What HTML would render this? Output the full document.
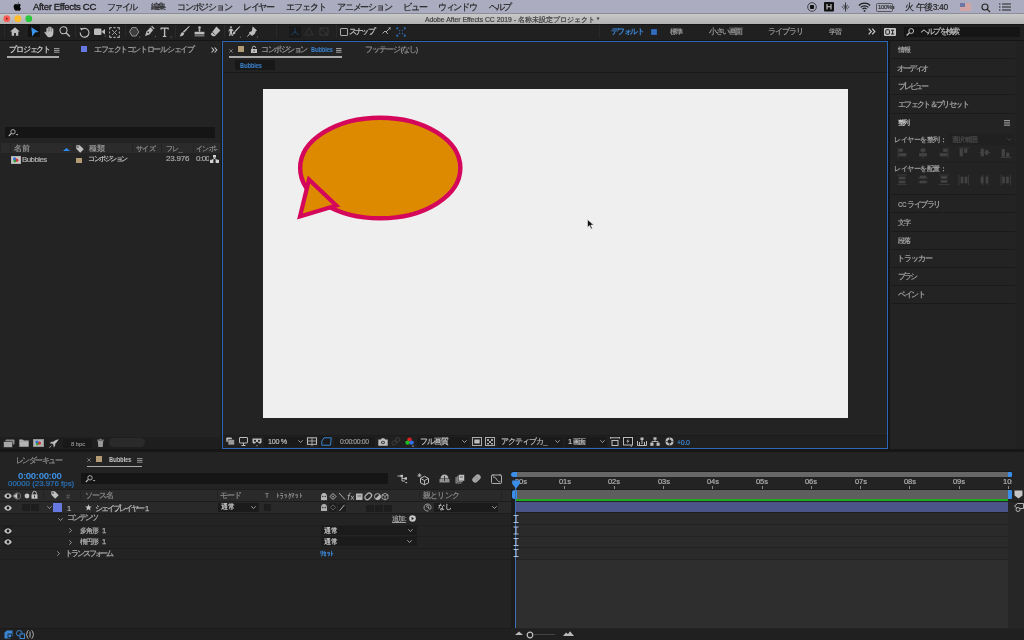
<!DOCTYPE html>
<html><head><meta charset="utf-8">
<style>
*{margin:0;padding:0;box-sizing:border-box}
html,body{width:1024px;height:640px;overflow:hidden;background:#161616;font-family:"Liberation Sans",sans-serif;position:relative}
.a{position:absolute}
.t{position:absolute;white-space:nowrap;line-height:1;will-change:transform}
svg{position:absolute;overflow:visible}
.mb{font-size:8.5px;letter-spacing:-1px;color:#262626;top:3px;-webkit-text-stroke:0.2px #262626}
.pnl{position:absolute;background:#232323}
.ptxt{color:#a8a8a8;font-size:8px;letter-spacing:-0.6px}
.sep{position:absolute;height:1px;background:#1a1a1a}
</style></head><body>

<!-- ============ MENU BAR ============ -->
<div class="a" style="left:0;top:0;width:1024px;height:13px;background:#abacc0"></div>
<div class="a" style="left:0;top:12.8px;width:1024px;height:1px;background:#8d8e9b"></div>
<svg style="left:13px;top:2px" width="9" height="9" viewBox="0 0 9 9"><path d="M6 0.2C5.3 0.3 4.6 0.9 4.6 1.7 5.3 1.7 6 1.1 6 0.2ZM4.5 2.2C3.9 2.2 3.4 1.9 2.7 1.9 1.6 2 .6 2.9.6 4.6c0 1.7 1.1 4.2 2.2 4.2.6 0 .9-.4 1.6-.4.8 0 1 .4 1.6.4 1 0 1.6-1.5 2-2.4-1.3-.6-1.3-2.6-.1-3.3-.5-.8-1.2-1-1.8-1-.7 0-1.2.3-1.6.3Z" fill="#0a0a0a"/></svg>
<div class="t" style="left:33px;top:2.3px;font-size:9.6px;color:#1c1c1c;letter-spacing:-0.35px;-webkit-text-stroke:0.3px #1c1c1c">After Effects CC</div>
<div class="t mb" style="left:107.20px;letter-spacing:-1.57px;-webkit-text-stroke-width:0.2px">ファイル</div>
<div class="t mb" style="left:150.8px;font-size:7.8px;letter-spacing:-0.6px;top:3.3px;-webkit-text-stroke-width:0.2px">編集</div>
<div class="t mb" style="left:177.20px;letter-spacing:-1.20px;-webkit-text-stroke-width:0.2px">コンポジション</div>
<div class="t mb" style="left:243.20px;letter-spacing:-1.36px;-webkit-text-stroke-width:0.2px">レイヤー</div>
<div class="t mb" style="left:285.70px;letter-spacing:-1.01px;-webkit-text-stroke-width:0.2px">エフェクト</div>
<div class="t mb" style="left:337.10px;letter-spacing:-1.22px;-webkit-text-stroke-width:0.2px">アニメーション</div>
<div class="t mb" style="left:402.80px;letter-spacing:-1.10px;-webkit-text-stroke-width:0.2px">ビュー</div>
<div class="t mb" style="left:438.00px;letter-spacing:-1.31px;-webkit-text-stroke-width:0.2px">ウィンドウ</div>
<div class="t mb" style="left:488.80px;letter-spacing:-1.90px;-webkit-text-stroke-width:0.2px">ヘルプ</div>
<!-- status icons -->
<svg style="left:807px;top:2px" width="11" height="10"><circle cx="5" cy="5" r="4.3" fill="none" stroke="#333" stroke-width="0.9"/><rect x="3" y="3" width="4" height="4" rx="0.8" fill="#111"/></svg>
<svg style="left:824px;top:2px" width="10" height="10"><rect x="0" y="0" width="10" height="9.5" rx="1" fill="#111"/><path d="M3 2v5.5M7 2v5.5M3 4.7h4" stroke="#ccc" stroke-width="1.1"/></svg>
<svg style="left:841px;top:2px" width="9" height="10" viewBox="0 0 9 10"><path d="M4.5 0.5v9M2.3 3l4.4 4M6.7 3L2.3 7M0.8 5h1.5M6.7 5h1.5" stroke="#2a2a2a" stroke-width="0.9" fill="none"/></svg>
<svg style="left:858px;top:2px" width="13" height="10" viewBox="0 0 13 10"><path d="M0.8 3.5a8.2 8.2 0 0 1 11.4 0M2.6 5.4a5.6 5.6 0 0 1 7.8 0M4.4 7.2a3 3 0 0 1 4.2 0" stroke="#1e1e1e" stroke-width="1.15" fill="none"/><circle cx="6.5" cy="8.9" r="0.9" fill="#1e1e1e"/></svg>
<svg style="left:876px;top:2.5px" width="19" height="9"><rect x="0.5" y="0.5" width="16" height="8" rx="1" fill="none" stroke="#444" stroke-width="0.8"/><rect x="17" y="3" width="1.3" height="3" fill="#444"/></svg>
<div class="t" style="left:878px;top:3.5px;font-size:6px;color:#333;letter-spacing:-0.3px;-webkit-text-stroke-width:0.2px">100%</div>
<div class="t mb" style="left:904.5px;letter-spacing:-0.4px;-webkit-text-stroke-width:0.2px">火 午後3:40</div>
<svg style="left:960px;top:3px" width="11" height="8"><rect width="11" height="8" fill="#d8b8b8"/><path d="M0 1h11M0 3h11M0 5h11M0 7h11" stroke="#c88888" stroke-width="0.8"/><rect width="5" height="4" fill="#6d76a8"/></svg>
<svg style="left:981px;top:2.5px" width="10" height="10"><circle cx="4" cy="4" r="3" fill="none" stroke="#222" stroke-width="1.1"/><path d="M6.2 6.2L9 9" stroke="#222" stroke-width="1.2"/></svg>
<svg style="left:999px;top:3px" width="12" height="8"><path d="M3 1h9M3 4h9M3 7h9" stroke="#222" stroke-width="1.1"/><circle cx="0.8" cy="1" r="0.7" fill="#222"/><circle cx="0.8" cy="4" r="0.7" fill="#222"/><circle cx="0.8" cy="7" r="0.7" fill="#222"/></svg>

<!-- ============ TITLE BAR ============ -->
<div class="a" style="left:0;top:13.8px;width:1024px;height:9.8px;background:linear-gradient(#c9c9c9,#b3b3b3)"></div><div class="a" style="left:0;top:23.6px;width:1024px;height:1px;background:#151515"></div>
<svg style="left:0;top:13px" width="40" height="11"><circle cx="6.8" cy="5.7" r="3.4" fill="#fb5e57"/><circle cx="6.8" cy="5.7" r="0.9" fill="#8a1a14"/><circle cx="17.8" cy="5.7" r="3.4" fill="#fdbb2e"/><circle cx="28.8" cy="5.7" r="3.4" fill="#2ac83f"/></svg>
<div class="t" style="left:425px;top:16.5px;font-size:6.8px;color:#3e3e3e;-webkit-text-stroke-width:0.2px">Adobe After Effects CC 2019 - 名称未設定プロジェクト *</div>

<!-- ============ TOOLBAR ============ -->
<div class="a" style="left:0;top:24.6px;width:1024px;height:15.2px;background:#202020"></div>
<div class="a" style="left:0;top:39.8px;width:1024px;height:1.2px;background:#151515"></div>

<!-- tool icons -->
<div class="a" style="left:4px;top:25px;width:1px;height:13px;background:#2a2a2a"></div>
<svg style="left:10px;top:27px" width="10" height="9" viewBox="0 0 10 9"><path d="M5 0.3L0.2 4.6h1.5V8.8h2.4V6h1.8v2.8h2.4V4.6h1.5Z" fill="#bdbdbd"/></svg>
<div class="a" style="left:28px;top:25px;width:12px;height:12px;background:#121212"></div>
<svg style="left:31px;top:26.5px" width="8" height="10" viewBox="0 0 8 10"><path d="M0.3 0.2L7.8 5 4 5.4 1.3 9.6Z" fill="#3a95f0"/></svg>
<svg style="left:44px;top:26px" width="11" height="12" viewBox="0 0 11 12"><g stroke="#bdbdbd" stroke-linecap="round" stroke-width="1.5" fill="none"><path d="M3.2 6V2.6M5 5.5V1.2M6.8 5.5V1.6M8.6 6V3"/></g><path d="M2.5 5.5h6.8v2c0 2.2-1.5 3.8-3.6 3.8-1.4 0-2.2-.7-2.9-1.6L.6 6.8c-.4-.5.2-1.3.9-.9L2.5 6.8Z" fill="#bdbdbd"/></svg>
<svg style="left:59px;top:26px" width="12" height="11" viewBox="0 0 12 11"><circle cx="4.5" cy="4.3" r="3.5" fill="none" stroke="#bdbdbd" stroke-width="1.1"/><path d="M7 6.8L10.8 10.5" stroke="#bdbdbd" stroke-width="1.4"/></svg>
<div class="a" style="left:75px;top:25px;width:1px;height:13px;background:#2a2a2a"></div>
<svg style="left:79px;top:26.5px" width="11" height="11" viewBox="0 0 11 11"><path d="M3 2.2A4.4 4.4 0 1 1 1.2 5.5" fill="none" stroke="#bdbdbd" stroke-width="1.1"/><path d="M0.8 0.8L3.8 1.2 2.6 3.8Z" fill="#bdbdbd"/></svg>
<svg style="left:94px;top:27px" width="12" height="10" viewBox="0 0 12 10"><rect x="0" y="1.5" width="7.5" height="6.5" rx="1.2" fill="#bdbdbd"/><path d="M7.5 4.7L11 2v5.5Z" fill="#bdbdbd"/><path d="M10.5 9.5h1.2V8.3Z" fill="#999"/></svg>
<svg style="left:109px;top:26.5px" width="11" height="11" viewBox="0 0 11 11"><path d="M0.6 0.6h2.2M4.4 0.6h2.2M8.2 0.6h2.2M0.6 10.4h2.2M4.4 10.4h2.2M8.2 10.4h2.2M0.6 0.6v2.2M0.6 4.4v2.2M0.6 8.2v2.2M10.4 0.6v2.2M10.4 4.4v2.2M10.4 8.2v2.2" stroke="#a8a8a8" stroke-width="1.1"/><path d="M3 3L8 8M8 3L3 8" stroke="#a8a8a8" stroke-width="0.9"/></svg>
<div class="a" style="left:125px;top:25px;width:1px;height:13px;background:#2a2a2a"></div>
<svg style="left:129px;top:26.5px" width="12" height="11" viewBox="0 0 12 11"><path d="M3 0.6h4.2L9.8 4.8 7.2 9H3L0.6 4.8Z" fill="#3c3c3c" stroke="#a0a0a0" stroke-width="0.9"/><path d="M10 10.5h1.2V9.3Z" fill="#999"/></svg>
<svg style="left:144px;top:26px" width="12" height="12" viewBox="0 0 12 12"><path d="M6.5 1.3l2.6 2.6L5.5 8.5 1 10l1.5-4.5Z" fill="#bdbdbd"/><path d="M7.6 0.3l2.6 2.6" stroke="#bdbdbd" stroke-width="1.3"/><circle cx="4.2" cy="6.4" r="0.8" fill="#1e1e1e"/><path d="M10.5 11h1.2V9.8Z" fill="#999"/></svg>
<svg style="left:160px;top:26.5px" width="12" height="11" viewBox="0 0 12 11"><path d="M0.5 0.5h8.2v2.2h-0.8L7.4 1.7H5.3v7.1l1.1 0.5V9.9H2.8V9.3l1.1-0.5V1.7H1.8L1.3 2.7H0.5Z" fill="#bdbdbd"/><path d="M10.3 10.5h1.2V9.3Z" fill="#999"/></svg>
<div class="a" style="left:175px;top:25px;width:1px;height:13px;background:#2a2a2a"></div>
<svg style="left:179px;top:26px" width="11" height="11" viewBox="0 0 11 11"><path d="M10.3 0.4L5.2 6.3 4.3 5.5Z" fill="#bdbdbd" stroke="#bdbdbd" stroke-width="0.8"/><path d="M3.6 6.2c1.2 0 1.7.8 1.4 1.8-.4 1.5-2.4 2.4-4.5 2.3 1-.7.9-1.6 1.3-2.6.4-.9 1-1.5 1.8-1.5Z" fill="#bdbdbd"/></svg>
<svg style="left:194px;top:26px" width="11" height="11" viewBox="0 0 11 11"><circle cx="5.5" cy="1.5" r="1.3" fill="#bdbdbd"/><path d="M4.7 2.5h1.6v3.2H4.7Z" fill="#bdbdbd"/><path d="M0.6 5.8h9.8v2.6H0.6Z" fill="#bdbdbd"/><path d="M0.6 9.2h9.8v1.2H0.6Z" fill="#8a8a8a"/></svg>
<svg style="left:210px;top:26px" width="11" height="11" viewBox="0 0 11 11"><path d="M6.4 0.6l4 4-5.6 5.6H2.6L0.6 8.2Z" fill="#bdbdbd"/><path d="M2.5 6.3l2.2 2.2" stroke="#1e1e1e" stroke-width="0.9"/></svg>
<div class="a" style="left:224px;top:25px;width:1px;height:13px;background:#2a2a2a"></div>
<svg style="left:228px;top:26px" width="13" height="12" viewBox="0 0 13 12"><circle cx="3" cy="1.3" r="1" fill="#bdbdbd"/><path d="M1.6 2.8h2.6l1.4 2.2-0.7.4-0.9-1.2V7L5 10H3.8L2.9 7.6 2.2 10H1.1L1.7 6.8V4.3L0.9 5.4 0.4 5Z" fill="#bdbdbd"/><path d="M11.8 0.5L7.6 5.5 7 5Z" fill="#bdbdbd" stroke="#bdbdbd" stroke-width="0.8"/><path d="M6.2 5.4c1 0 1.4.6 1.2 1.5-.3 1.1-1.8 1.8-3.4 1.7.7-.5.7-1.2 1-1.9.3-.7.6-1.3 1.2-1.3Z" fill="#bdbdbd"/><path d="M11.6 11.5h1.2V10.3Z" fill="#999"/></svg>
<svg style="left:247px;top:26px" width="12" height="12" viewBox="0 0 12 12"><path d="M5.8 0.4l4.2 4.2-1.2.6-.9 2.6L5 10.1 3.9 9 1.8 6.9 2.7 5.9 4.9 4.9 5.3 1.8Z" fill="#bdbdbd"/><path d="M3.3 7.2L0.4 10.6" stroke="#bdbdbd" stroke-width="1"/><path d="M9.8 11.5H11V10.3Z" fill="#999"/></svg>
<div class="a" style="left:276px;top:25px;width:1px;height:13px;background:#2a2a2a"></div>
<div class="a" style="left:289px;top:25.5px;width:12px;height:12px;background:#191919"></div>
<svg style="left:290px;top:27px" width="10" height="9" viewBox="0 0 10 9"><path d="M5 0.5V5L1 8M5 5l4 3" stroke="#1f4068" stroke-width="0.9" fill="none"/><circle cx="5" cy="5" r="0.8" fill="#1f4068"/></svg>
<svg style="left:304px;top:27px" width="10" height="9" viewBox="0 0 10 9"><path d="M5 0.5L1 8h8Z" stroke="#363636" stroke-width="0.9" fill="none"/></svg>
<svg style="left:319px;top:27px" width="10" height="9" viewBox="0 0 10 9"><path d="M1 1h8v7H1Z M1 1l8 7" stroke="#3c3c3c" stroke-width="0.9" fill="none"/></svg>
<div class="a" style="left:335.5px;top:25px;width:1px;height:13px;background:#2a2a2a"></div>
<div class="a" style="left:340px;top:27.5px;width:8px;height:8px;border:1.1px solid #a8a8a8;border-radius:1px"></div>
<div class="t" style="left:348.50px;top:27.5px;font-size:7.8px;letter-spacing:-1.77px;color:#b4b4b4;-webkit-text-stroke-width:0.3px">スナップ</div>
<svg style="left:382px;top:27px" width="9" height="9" viewBox="0 0 9 9"><path d="M0.5 6.5L3 4l3 3M4 5l4.3-4.3" stroke="#a8a8a8" stroke-width="1" fill="none"/><path d="M6 0.5h2.5V3Z" fill="#a8a8a8"/></svg>
<svg style="left:396px;top:27px" width="10" height="10" viewBox="0 0 10 10"><g fill="#2f6fba"><circle cx="1.3" cy="1.3" r="1.1"/><circle cx="8.7" cy="1.3" r="1.1"/><circle cx="1.3" cy="8.7" r="1.1"/><circle cx="8.7" cy="8.7" r="1.1"/><circle cx="3.6" cy="3.6" r="0.7"/><circle cx="6.4" cy="3.6" r="0.7"/><circle cx="3.6" cy="6.4" r="0.7"/><circle cx="6.4" cy="6.4" r="0.7"/></g></svg>
<div class="a" style="left:598.5px;top:25px;width:1px;height:13px;background:#2a2a2a"></div>
<div class="t" style="left:610.70px;top:28px;font-size:8px;letter-spacing:-1.61px;color:#3b86d4;font-weight:bold">デフォルト</div>
<svg style="left:651px;top:29px" width="6" height="6"><rect width="6" height="6" fill="#2b5ca8"/><path d="M0.8 1.5h4.4M0.8 3h4.4M0.8 4.5h4.4" stroke="#3f7cd0" stroke-width="0.7"/></svg>
<div class="t" style="left:670.00px;top:28px;font-size:7px;letter-spacing:-1.50px;color:#8e8e8e;font-weight:bold">標準</div>
<div class="t" style="left:709.00px;top:28px;font-size:8px;letter-spacing:-1.45px;color:#8e8e8e;font-weight:bold">小さい画面</div>
<div class="t" style="left:768.00px;top:28px;font-size:8px;letter-spacing:-0.95px;color:#8e8e8e;font-weight:bold">ライブラリ</div>
<div class="t" style="left:829.00px;top:28px;font-size:7px;letter-spacing:-1.50px;color:#8e8e8e;font-weight:bold">学習</div>
<svg style="left:868px;top:28px" width="8" height="7" viewBox="0 0 8 7"><path d="M0.7 0.7L3.3 3.5 0.7 6.3M4.2 0.7L6.8 3.5 4.2 6.3" stroke="#c8c8c8" stroke-width="1.2" fill="none"/></svg>
<div class="a" style="left:880px;top:25px;width:1px;height:13px;background:#181818"></div>
<svg style="left:884px;top:28px" width="12" height="8" viewBox="0 0 12 8"><rect x="0" y="0" width="12" height="8" rx="1" fill="#c4c4c4"/><rect x="1.8" y="1.8" width="3.6" height="4.4" rx="0.6" fill="none" stroke="#1e1e1e" stroke-width="1"/><path d="M7 2.2h3.2M8.6 2.2v3.8M7 6h3.2" stroke="#1e1e1e" stroke-width="1"/></svg>
<div class="a" style="left:904px;top:26.5px;width:116px;height:10.5px;background:#151515"></div>
<svg style="left:906px;top:28px" width="9" height="8" viewBox="0 0 9 8"><circle cx="5.2" cy="3" r="2.4" fill="none" stroke="#bdbdbd" stroke-width="1"/><path d="M3.5 4.7L0.6 7.5" stroke="#bdbdbd" stroke-width="1.3"/></svg>
<div class="t" style="left:921.00px;top:28px;font-size:8px;letter-spacing:-1.80px;color:#b0b0b0;font-weight:bold">ヘルプを検索</div>

<!-- ============ PROJECT PANEL ============ -->
<div class="pnl" style="left:0;top:41px;width:221px;height:408px"></div>

<!-- project tabs -->
<div class="t" style="left:8.5px;top:45.5px;font-size:7.6px;letter-spacing:-1.15px;color:#c8c8c8;font-weight:bold">プロジェクト</div>
<svg style="left:54px;top:47.8px" width="6" height="5"><path d="M0 0.6h5.5M0 2.4h5.5M0 4.2h5.5" stroke="#b0b0b0" stroke-width="0.9"/></svg>
<div class="a" style="left:7px;top:56px;width:52px;height:1.5px;background:#a9a9a9"></div>
<div class="a" style="left:81px;top:46.3px;width:6.2px;height:6.2px;background:#6679e0"></div>
<div class="t" style="left:93.5px;top:45.5px;font-size:7.6px;letter-spacing:-1.42px;color:#9a9a9a;font-weight:bold">エフェクトコントロール シェイプ</div>
<svg style="left:211px;top:47px" width="7" height="6" viewBox="0 0 7 6"><path d="M0.6 0.5L2.8 3 0.6 5.5M3.6 0.5L5.8 3 3.6 5.5" stroke="#c8c8c8" stroke-width="1.1" fill="none"/></svg>
<!-- search -->
<div class="a" style="left:5px;top:127px;width:210px;height:10.5px;background:#151515"></div>
<svg style="left:8px;top:128.5px" width="11" height="8" viewBox="0 0 11 8"><circle cx="5" cy="2.8" r="2.2" fill="none" stroke="#b8b8b8" stroke-width="0.9"/><path d="M3.4 4.4L0.8 7" stroke="#b8b8b8" stroke-width="1.2"/><path d="M7.8 5h2.6L9.1 6.4Z" fill="#b8b8b8"/></svg>
<!-- header -->
<div class="a" style="left:1px;top:143px;width:219px;height:10px;background:#2b2b2b"></div>
<div class="a" style="left:9.5px;top:144px;width:1px;height:8px;background:#222"></div>
<div class="a" style="left:72.5px;top:144px;width:1px;height:8px;background:#222"></div>
<div class="a" style="left:85.5px;top:144px;width:1px;height:8px;background:#222"></div>
<div class="a" style="left:132.4px;top:144px;width:1px;height:8px;background:#222"></div>
<div class="a" style="left:160.5px;top:144px;width:1px;height:8px;background:#222"></div>
<div class="a" style="left:192.6px;top:144px;width:1px;height:8px;background:#222"></div>
<div class="t" style="left:13.8px;top:144.5px;font-size:7.5px;color:#969696;letter-spacing:-0.3px;-webkit-text-stroke-width:0.2px">名前</div>
<svg style="left:63px;top:147.5px" width="7" height="3"><path d="M0 3L3.5 0 7 3Z" fill="#2b8ef0"/></svg>
<svg style="left:75.5px;top:144.5px" width="8" height="8" viewBox="0 0 8 8"><path d="M0.3 0.3h3.5l3.9 3.9-3.5 3.5L0.3 3.8Z" fill="#c0c0c0"/><circle cx="2" cy="2" r="0.8" fill="#2b2b2b"/></svg>
<div class="t" style="left:89px;top:144.5px;font-size:7.5px;color:#969696;letter-spacing:0px;-webkit-text-stroke-width:0.2px">種類</div>
<div class="t" style="left:136.3px;top:144.5px;font-size:7.3px;color:#8a8a8a;letter-spacing:-0.7px;-webkit-text-stroke-width:0.2px">サイズ</div>
<div class="t" style="left:165.6px;top:144.5px;font-size:7.3px;color:#8a8a8a;letter-spacing:-0.7px;-webkit-text-stroke-width:0.2px">フレ_</div>
<div class="t" style="left:196px;top:144.5px;font-size:7.3px;color:#8a8a8a;letter-spacing:-0.7px;-webkit-text-stroke-width:0.2px">インポ-</div>
<!-- row -->
<svg style="left:10.7px;top:156px" width="10" height="8" viewBox="0 0 10 8"><rect x="0" y="0" width="10" height="8" fill="#a8a8a8"/><rect x="0.6" y="0.6" width="8.8" height="6.8" fill="#c8c8c8"/><circle cx="3.6" cy="2.9" r="1.6" fill="#2d6fd8"/><circle cx="5.8" cy="4.2" r="1.6" fill="#d83030"/><circle cx="3.8" cy="5.1" r="1.4" fill="#2a9a3a"/></svg>
<div class="t" style="left:22.4px;top:156px;font-size:7.9px;color:#b0b0b0;letter-spacing:-0.55px;-webkit-text-stroke-width:0.2px">Bubbles</div>
<div class="a" style="left:76px;top:157.5px;width:5.8px;height:5.6px;background:#b39c75"></div>
<div class="t" style="left:88.20px;top:155.3px;font-size:7.3px;color:#b8b8b8;font-weight:bold;letter-spacing:-1.45px">コンポジション</div>
<div class="t" style="left:165.5px;top:155px;font-size:8px;color:#a6a6a6;letter-spacing:-0.2px;-webkit-text-stroke-width:0.2px">23.976</div>
<div class="t" style="left:196px;top:155px;font-size:8px;color:#a6a6a6;letter-spacing:-0.5px;width:13px;overflow:hidden;-webkit-text-stroke-width:0.2px">0:00</div>
<svg style="left:210px;top:155px" width="9" height="8" viewBox="0 0 9 8"><rect x="3" y="0" width="3" height="2.6" fill="#d0d0d0"/><path d="M4.5 2.6v1.6M1.8 5l2.7-1.5 2.7 1.5" stroke="#d0d0d0" stroke-width="0.8" fill="none"/><rect x="0" y="4.8" width="3.4" height="3.2" fill="#d0d0d0"/><rect x="5.6" y="4.8" width="3.4" height="3.2" fill="#d0d0d0"/></svg>
<!-- bottom toolbar -->
<div class="a" style="left:0;top:437px;width:221px;height:12px;background:#1e1e1e"></div>
<svg style="left:3px;top:439px" width="12" height="9" viewBox="0 0 12 9"><rect x="2.5" y="0.5" width="9" height="5" rx="0.8" fill="#8a8a8a"/><rect x="0.5" y="2.5" width="9" height="6" rx="0.8" fill="#a8a8a8" stroke="#1e1e1e" stroke-width="0.6"/></svg>
<svg style="left:19px;top:439px" width="10" height="8" viewBox="0 0 10 8"><path d="M0.3 0.5h3.5l1 1h4.9v6.2H0.3Z" fill="#b4b4b4"/><path d="M0.3 2.3h9.4" stroke="#8a8a8a" stroke-width="0.5"/></svg>
<svg style="left:33px;top:439px" width="11" height="8" viewBox="0 0 11 8"><rect x="0" y="0" width="11" height="8" fill="#8a8a8a"/><rect x="0.7" y="0.7" width="9.6" height="6.6" fill="#b4b4b4"/><circle cx="4" cy="3" r="1.6" fill="#2d6fd8"/><circle cx="6.4" cy="4.2" r="1.6" fill="#d83030"/><circle cx="4.3" cy="5.1" r="1.4" fill="#2a9a3a"/></svg>
<svg style="left:49px;top:439px" width="10" height="9" viewBox="0 0 10 9"><path d="M9.7 0.3C7 0.5 4.5 2 3 4.5l1.5 1.5C7 4.5 8.7 2.5 9.7 0.3Z" fill="#c0c0c0"/><path d="M3 4.5L0.5 4.3 2.5 2.8h2ZM4.5 6l.2 2.5 1.5-2v-2Z" fill="#c0c0c0"/><path d="M2.5 6.5L0.3 8.7" stroke="#c0c0c0" stroke-width="0.8"/></svg>
<div class="a" style="left:63px;top:439px;width:29px;height:8.5px;background:#181818"></div>
<div class="t" style="left:71px;top:440.8px;font-size:6px;color:#8a8a8a;letter-spacing:-0.1px;-webkit-text-stroke-width:0.15px">8 bpc</div>
<svg style="left:97px;top:439px" width="7" height="8" viewBox="0 0 7 8"><path d="M0 1.2h7M2.5 0.3h2" stroke="#9a9a9a" stroke-width="0.9"/><path d="M0.8 2h5.4l-.5 6H1.3Z" fill="#9a9a9a"/></svg>
<div class="a" style="left:109px;top:438.2px;width:36px;height:9px;background:#2a2a2a;border-radius:4.5px"></div>

<!-- ============ COMP PANEL ============ -->
<div class="pnl" style="left:222px;top:41px;width:666px;height:408px;border:1px solid #2c66b6"></div>

<!-- comp tab -->
<svg style="left:229px;top:48.5px" width="4" height="4"><path d="M0.3 0.3L3.7 3.7M3.7 0.3L0.3 3.7" stroke="#8a8a8a" stroke-width="0.8"/></svg>
<div class="a" style="left:238px;top:46.2px;width:6px;height:6px;background:#b39c75"></div>
<svg style="left:251px;top:45.5px" width="6" height="7" viewBox="0 0 6 7"><path d="M1.3 3V1.9a1.7 1.7 0 0 1 3.4 0" fill="none" stroke="#c0c0c0" stroke-width="0.9"/><rect x="0" y="3" width="6" height="4" fill="#c0c0c0"/><rect x="2.6" y="4.2" width="0.9" height="1.6" fill="#232323"/></svg>
<div class="t" style="left:261.00px;top:45.5px;font-size:7.6px;letter-spacing:-1.42px;color:#9a9a9a;-webkit-text-stroke-width:0.2px">コンポジション</div>
<div class="t" style="left:310.5px;top:46.3px;font-size:7px;letter-spacing:-0.1px;color:#3b86d4;font-weight:bold;transform:scaleX(0.81);transform-origin:0 0">Bubbles</div>
<svg style="left:336px;top:48px" width="6" height="5"><path d="M0 0.6h5.5M0 2.4h5.5M0 4.2h5.5" stroke="#b0b0b0" stroke-width="0.9"/></svg>
<div class="a" style="left:229px;top:56.3px;width:113px;height:1.4px;background:#a9a9a9"></div>
<div class="t" style="left:364.5px;top:45.5px;font-size:7.6px;letter-spacing:-1.1px;color:#888;font-weight:bold">フッテージ (なし)</div>
<div class="a" style="left:235px;top:60px;width:40px;height:10px;background:#181818"></div>
<div class="t" style="left:239.8px;top:61.5px;font-size:7px;letter-spacing:-0.1px;color:#3b86d4;font-weight:bold;transform:scaleX(0.81);transform-origin:0 0">Bubbles</div>
<div class="a" style="left:223px;top:72px;width:664px;height:1px;background:#1a1a1a"></div>
<div class="a" style="left:262.5px;top:89px;width:585.5px;height:329px;background:#efefef"></div>

<svg style="left:262.5px;top:89px" width="586" height="329" viewBox="262.5 89 586 329"><ellipse cx="379.75" cy="168" rx="80.1" ry="50.3" fill="#dd8a00" stroke="#d5075a" stroke-width="4.4"/><path d="M308.5 179.6L299.5 216.4 335.8 205.5Z" fill="#dd8a00" stroke="#d5075a" stroke-width="4.2" stroke-linejoin="miter"/></svg>
<svg style="left:587.2px;top:218.5px" width="8" height="11" viewBox="0 0 8 11"><path d="M0.5 0.5v8l2-2 1.5 3.5 1.3-.6-1.5-3.3h2.9Z" fill="#111" stroke="#eee" stroke-width="0.6"/></svg>
<!-- comp bottom toolbar -->
<div class="a" style="left:223px;top:434.5px;width:664px;height:1px;background:#1b1b1b"></div>
<div class="a" style="left:223px;top:435.5px;width:664px;height:12px;background:#202020"></div>

<svg style="left:226px;top:437px" width="9" height="9" viewBox="0 0 9 9"><rect x="0.3" y="0.5" width="5.5" height="4.5" rx="0.8" fill="#bdbdbd"/><rect x="2" y="2.5" width="6.5" height="5.5" rx="0.8" fill="#9a9a9a" stroke="#202020" stroke-width="0.6"/></svg>
<svg style="left:239px;top:437px" width="9" height="9" viewBox="0 0 9 9"><rect x="0.5" y="0.5" width="8" height="5.5" rx="0.5" fill="none" stroke="#bdbdbd" stroke-width="1"/><path d="M2.5 8.5h4M4.5 6v2.5" stroke="#bdbdbd" stroke-width="1"/></svg>
<svg style="left:252px;top:437px" width="10" height="10" viewBox="0 0 10 10"><path d="M0.5 1.5h9v3.5c0 1-.8 1.5-1.8 1.5H7L5.8 5H4.2L3 6.5H2.3C1.3 6.5.5 6 .5 5Z" fill="#bdbdbd"/><circle cx="3" cy="3.8" r="1.1" fill="#202020"/><circle cx="7" cy="3.8" r="1.1" fill="#202020"/><path d="M4 8.5h2L5 9.5Z" fill="#bdbdbd"/></svg>
<div class="a" style="left:264px;top:436.5px;width:40.5px;height:10.5px;background:#1a1a1a"></div>
<div class="t" style="left:268px;top:438px;font-size:7.2px;color:#bdbdbd;letter-spacing:-0.3px;-webkit-text-stroke-width:0.2px">100 %</div>
<svg style="left:298px;top:440px" width="5" height="3"><path d="M0.3 0.3L2.5 2.5 4.7 0.3" stroke="#bdbdbd" stroke-width="0.8" fill="none"/></svg>
<svg style="left:307px;top:437px" width="10" height="10" viewBox="0 0 10 10"><rect x="0.5" y="0.8" width="9" height="6.5" fill="none" stroke="#bdbdbd" stroke-width="1"/><path d="M5 0.8v6.5M0.5 4h9" stroke="#bdbdbd" stroke-width="0.8"/><path d="M4 8.5h2L5 9.5Z" fill="#bdbdbd"/></svg>
<div class="a" style="left:319px;top:436px;width:13px;height:11px;background:#1a1a1a"></div>
<svg style="left:320.5px;top:437px" width="11" height="9" viewBox="0 0 11 9"><path d="M3 0.8h7.2L9.5 8.2H0.8V4.2Z" fill="none" stroke="#3b86d4" stroke-width="1"/></svg>
<div class="a" style="left:334px;top:436.5px;width:41px;height:10.5px;background:#1a1a1a"></div>
<div class="t" style="left:340px;top:438.5px;font-size:6.8px;color:#9a9a9a;letter-spacing:-0.35px;-webkit-text-stroke-width:0.2px">0:00:00:00</div>
<svg style="left:378px;top:437.5px" width="10" height="8" viewBox="0 0 10 8"><path d="M0.3 1.5h2.5L3.8 0.3h2.4l1 1.2h2.5V7.7H0.3Z" fill="#bdbdbd"/><circle cx="5" cy="4.5" r="1.8" fill="#202020"/><circle cx="5" cy="4.5" r="1" fill="#bdbdbd"/></svg>
<svg style="left:391px;top:437px" width="10" height="9" viewBox="0 0 10 9"><rect x="0.8" y="4" width="5" height="3.5" rx="1.7" transform="rotate(-40 3.3 5.7)" fill="none" stroke="#3a3a3a" stroke-width="1"/><rect x="4" y="1.3" width="5" height="3.5" rx="1.7" transform="rotate(-40 6.5 3)" fill="none" stroke="#3a3a3a" stroke-width="1"/></svg>
<svg style="left:404.5px;top:436.5px" width="10" height="11" viewBox="0 0 10 11"><circle cx="4.5" cy="2.6" r="2.2" fill="#e02020"/><circle cx="2.6" cy="5.6" r="2.2" fill="#20c020"/><circle cx="6.6" cy="5.6" r="2.2" fill="#3070e8"/><path d="M6.8 8.8h2.4L8 10Z" fill="#bdbdbd"/></svg>
<div class="a" style="left:417px;top:436.5px;width:52px;height:10.5px;background:#1a1a1a"></div>
<div class="t" style="left:420px;top:437.5px;font-size:7.6px;color:#bdbdbd;letter-spacing:-1px;font-weight:bold">フル画質</div>
<svg style="left:462px;top:440px" width="5" height="3"><path d="M0.3 0.3L2.5 2.5 4.7 0.3" stroke="#bdbdbd" stroke-width="0.8" fill="none"/></svg>
<svg style="left:472px;top:437px" width="10" height="9" viewBox="0 0 10 9"><rect x="0.5" y="0.5" width="9" height="8" fill="none" stroke="#aaa" stroke-width="1"/><rect x="2.3" y="2.5" width="5.4" height="4" fill="#bdbdbd"/></svg>
<svg style="left:485px;top:437px" width="10" height="9" viewBox="0 0 10 9"><rect x="0.5" y="0.5" width="9" height="8" fill="none" stroke="#aaa" stroke-width="1"/><path d="M2 2h2v2H2ZM6 2h2v2H6ZM4 4h2v2H4ZM2 6h2v1.5H2ZM6 6h2v1.5H6Z" fill="#aaa"/></svg>
<div class="a" style="left:498px;top:436.5px;width:65px;height:10.5px;background:#1a1a1a"></div>
<div class="t" style="left:501px;top:437.5px;font-size:7.6px;color:#bdbdbd;letter-spacing:-0.95px;-webkit-text-stroke-width:0.2px">アクティブカ_</div>
<svg style="left:555px;top:440px" width="5" height="3"><path d="M0.3 0.3L2.5 2.5 4.7 0.3" stroke="#bdbdbd" stroke-width="0.8" fill="none"/></svg>
<div class="a" style="left:565px;top:436.5px;width:42px;height:10.5px;background:#1a1a1a"></div>
<div class="t" style="left:568px;top:437.5px;font-size:7.2px;color:#bdbdbd;letter-spacing:-0.7px;font-weight:bold">1 画面</div>
<svg style="left:600px;top:440px" width="5" height="3"><path d="M0.3 0.3L2.5 2.5 4.7 0.3" stroke="#bdbdbd" stroke-width="0.8" fill="none"/></svg>
<svg style="left:610px;top:437px" width="10" height="9" viewBox="0 0 10 9"><path d="M0.5 0.8h9M0.5 0v1.6M9.5 0v1.6" stroke="#bdbdbd" stroke-width="1"/><rect x="2" y="3.5" width="6" height="5" fill="none" stroke="#bdbdbd" stroke-width="1"/></svg>
<div class="a" style="left:622px;top:436px;width:12px;height:11px;background:#1a1a1a"></div>
<svg style="left:623px;top:437px" width="10" height="10" viewBox="0 0 10 10"><rect x="0.5" y="0.5" width="9" height="7.5" fill="none" stroke="#bdbdbd" stroke-width="1"/><path d="M5.5 1.8L3.2 4.6h1.6L4 6.8 6.6 3.8H5Z" fill="#bdbdbd"/><path d="M7 8.8h2.4L8.2 10Z" fill="#bdbdbd"/></svg>
<svg style="left:637px;top:437px" width="10" height="9" viewBox="0 0 10 9"><path d="M0.5 4v4.5h9V4" fill="none" stroke="#bdbdbd" stroke-width="1"/><rect x="3.5" y="0.5" width="3" height="2.5" fill="#bdbdbd"/><path d="M5 3v4M2.5 5v3M7.5 5v3" stroke="#bdbdbd" stroke-width="1"/></svg>
<svg style="left:650px;top:437px" width="10" height="9" viewBox="0 0 10 9"><rect x="3.5" y="0.3" width="3" height="2.5" fill="#bdbdbd"/><path d="M5 2.8v1.7M2 6V4.5h6V6" fill="none" stroke="#bdbdbd" stroke-width="0.9"/><rect x="0.3" y="5.8" width="3.2" height="3" fill="#bdbdbd"/><rect x="6.5" y="5.8" width="3.2" height="3" fill="#bdbdbd"/></svg>
<svg style="left:665px;top:437px" width="9" height="9" viewBox="0 0 9 9"><circle cx="4.5" cy="4.5" r="4" fill="#bdbdbd"/><circle cx="4.5" cy="4.5" r="2" fill="#202020"/><path d="M4.5 0.5v2M4.5 6.5v2M0.5 4.5h2M6.5 4.5h2" stroke="#202020" stroke-width="0.6"/></svg>
<div class="t" style="left:677px;top:438.5px;font-size:7px;color:#3b86d4;letter-spacing:-0.3px;-webkit-text-stroke-width:0.2px">+0.0</div>

<!-- ============ RIGHT PANEL ============ -->
<div class="pnl" style="left:890px;top:41px;width:126px;height:408px"></div>

<div class="a" style="left:1016px;top:41px;width:8px;height:408px;background:#212121"></div>
<div class="t" style="left:898.00px;top:46.5px;font-size:6.9px;letter-spacing:-1.00px;color:#9c9c9c;font-weight:bold">情報</div>
<div class="sep" style="left:891px;top:58px;width:124px"></div>
<div class="t" style="left:897.00px;top:64.5px;font-size:7.6px;letter-spacing:-2.05px;color:#9c9c9c;font-weight:bold">オーディオ</div>
<div class="sep" style="left:891px;top:76px;width:124px"></div>
<div class="t" style="left:898.00px;top:82.5px;font-size:7.6px;letter-spacing:-2.22px;color:#9c9c9c;font-weight:bold">プレビュー</div>
<div class="sep" style="left:891px;top:94px;width:124px"></div>
<div class="t" style="left:897.50px;top:101px;font-size:7.6px;letter-spacing:-1.65px;color:#9c9c9c;font-weight:bold">エフェクト＆プリセット</div>
<div class="sep" style="left:891px;top:112.5px;width:124px"></div>
<div class="t" style="left:898.00px;top:119.5px;font-size:6.9px;letter-spacing:-1.90px;color:#c4c4c4;font-weight:bold">整列</div>
<svg style="left:1004px;top:119.8px" width="6" height="6"><path d="M0 0.7h6M0 2.9h6M0 5.1h6" stroke="#c0c0c0" stroke-width="0.9"/></svg>
<div class="t" style="left:894.00px;top:135.5px;font-size:7.3px;letter-spacing:-0.42px;color:#9a9a9a;font-weight:bold">レイヤーを整列：</div>
<div class="a" style="left:948px;top:134px;width:66px;height:10.5px;background:#202020"></div>
<div class="t" style="left:952px;top:135.5px;font-size:7.3px;letter-spacing:-0.6px;color:#4a4a4a;-webkit-text-stroke-width:0.2px">選択範囲</div>
<svg style="left:1007px;top:138px" width="5" height="3"><path d="M0.3 0.3L2.5 2.5 4.7 0.3" stroke="#4a4a4a" stroke-width="0.8" fill="none"/></svg>
<svg style="left:895px;top:147px" width="120" height="12" viewBox="0 0 120 12" fill="#424242" stroke="#424242">
<g stroke-width="0.7"><path d="M3 0.5v11"/><rect x="4" y="2" width="3.5" height="2.5"/><rect x="4" y="6.5" width="7" height="2.5"/></g>
<g stroke-width="0.7" transform="translate(21 0)"><path d="M7 0.5v11"/><rect x="5" y="2" width="4" height="2.5"/><rect x="3.5" y="6.5" width="7" height="2.5"/></g>
<g stroke-width="0.7" transform="translate(42 0)"><path d="M11 0.5v11"/><rect x="6.5" y="2" width="3.5" height="2.5"/><rect x="3" y="6.5" width="7" height="2.5"/></g>
<g stroke-width="0.7" transform="translate(63 0)"><path d="M0.5 1h11"/><rect x="2" y="2" width="2.5" height="7"/><rect x="6.5" y="2" width="2.5" height="3.5"/></g>
<g stroke-width="0.7" transform="translate(84 0)"><path d="M0.5 5.5h11"/><rect x="2" y="2" width="2.5" height="7"/><rect x="6.5" y="3.5" width="2.5" height="4"/></g>
<g stroke-width="0.7" transform="translate(105 0)"><path d="M0.5 10.5h11"/><rect x="2" y="2.5" width="2.5" height="7"/><rect x="6.5" y="6" width="2.5" height="3.5"/></g>
</svg>
<div class="sep" style="left:895px;top:162px;width:118px;background:#1f1f1f"></div>
<div class="t" style="left:894.00px;top:164.5px;font-size:7.3px;letter-spacing:-0.42px;color:#9a9a9a;font-weight:bold">レイヤーを配置：</div>
<svg style="left:895px;top:174px" width="120" height="12" viewBox="0 0 120 12" fill="#424242" stroke="#424242">
<g stroke-width="0.7" transform="translate(1 0)"><path d="M1 1h10M1 10.5h10"/><rect x="3" y="3" width="6" height="2"/><rect x="3" y="7" width="6" height="2"/></g>
<g stroke-width="0.7" transform="translate(22 0)"><path d="M1 4h10M1 8h10"/><rect x="3" y="2" width="6" height="2"/><rect x="3" y="7" width="6" height="2"/></g>
<g stroke-width="0.7" transform="translate(43 0)"><path d="M1 1h10M1 10.5h10"/><rect x="3" y="2.5" width="6" height="2"/><rect x="3" y="6.5" width="6" height="2"/></g>
<g stroke-width="0.7" transform="translate(63 0)"><path d="M1 1v10M10.5 1v10"/><rect x="3" y="3" width="2" height="6"/><rect x="7" y="3" width="2" height="6"/></g>
<g stroke-width="0.7" transform="translate(84 0)"><path d="M4 1v10M8 1v10"/><rect x="2" y="3" width="2" height="6"/><rect x="7" y="3" width="2" height="6"/></g>
<g stroke-width="0.7" transform="translate(105 0)"><path d="M1 1v10M10.5 1v10"/><rect x="2.5" y="3" width="2" height="6"/><rect x="6.5" y="3" width="2" height="6"/></g>
</svg>
<div class="sep" style="left:891px;top:193.5px;width:124px"></div>
<div class="t" style="left:898px;top:202px;font-size:6.3px;letter-spacing:-0.6px;color:#9c9c9c;font-weight:bold">CC</div><div class="t" style="left:906.5px;top:201.2px;font-size:7.6px;letter-spacing:-1.5px;color:#9c9c9c;font-weight:bold">ライブラリ</div>
<div class="sep" style="left:891px;top:212px;width:124px"></div>
<div class="t" style="left:898.00px;top:219.8px;font-size:6.9px;letter-spacing:-1.40px;color:#9c9c9c;font-weight:bold">文字</div>
<div class="sep" style="left:891px;top:230.5px;width:124px"></div>
<div class="t" style="left:898.00px;top:238px;font-size:6.9px;letter-spacing:-1.40px;color:#9c9c9c;font-weight:bold">段落</div>
<div class="sep" style="left:891px;top:249px;width:124px"></div>
<div class="t" style="left:896.50px;top:255px;font-size:7.6px;letter-spacing:-1.05px;color:#9c9c9c;font-weight:bold">トラッカー</div>
<div class="sep" style="left:891px;top:267px;width:124px"></div>
<div class="t" style="left:898.00px;top:273px;font-size:7.6px;letter-spacing:-2.15px;color:#9c9c9c;font-weight:bold">ブラシ</div>
<div class="sep" style="left:891px;top:285px;width:124px"></div>
<div class="t" style="left:898.00px;top:291px;font-size:7.6px;letter-spacing:-1.30px;color:#9c9c9c;font-weight:bold">ペイント</div>
<div class="sep" style="left:891px;top:303px;width:124px"></div>

<!-- ============ TIMELINE ============ -->
<div class="pnl" style="left:0;top:452px;width:1024px;height:188px"></div>

<!-- timeline tabs -->
<div class="t" style="left:16.00px;top:456.50px;font-size:7.6px;letter-spacing:-1.53px;color:#8e8e8e;-webkit-text-stroke:0.2px #8e8e8e">レンダーキュー</div>
<svg style="left:87px;top:458px" width="4" height="4"><path d="M0.3 0.3L3.7 3.7M3.7 0.3L0.3 3.7" stroke="#8a8a8a" stroke-width="0.8"/></svg>
<div class="a" style="left:96px;top:456.2px;width:6px;height:6px;background:#b39c75"></div>
<div class="t" style="left:109px;top:456.3px;font-size:7px;letter-spacing:-0.1px;color:#c4c4c4;font-weight:bold;transform:scaleX(0.83);transform-origin:0 0">Bubbles</div>
<svg style="left:136.5px;top:457.5px" width="6" height="5"><path d="M0 0.6h5.5M0 2.4h5.5M0 4.2h5.5" stroke="#a0a0a0" stroke-width="0.9"/></svg>
<div class="a" style="left:87px;top:465.5px;width:55px;height:1.4px;background:#a9a9a9"></div>
<!-- timecode -->
<div class="t" style="left:17.5px;top:471px;font-size:9.6px;letter-spacing:-0.35px;color:#3d8ee2;font-weight:bold">0:00:00:00</div>
<div class="t" style="left:7.5px;top:480.3px;font-size:7.9px;letter-spacing:0px;color:#2a72b8;-webkit-text-stroke-width:0.2px">00000 (23.976 fps)</div>
<div class="a" style="left:81px;top:473px;width:306.5px;height:10.5px;background:#151515"></div>
<svg style="left:84.5px;top:474.5px" width="11" height="8" viewBox="0 0 11 8"><circle cx="5" cy="2.8" r="2.2" fill="none" stroke="#b8b8b8" stroke-width="0.9"/><path d="M3.4 4.4L0.8 7" stroke="#b8b8b8" stroke-width="1.2"/><path d="M7.8 5h2.6L9.1 6.4Z" fill="#b8b8b8"/></svg>
<!-- timeline toolbar icons -->
<svg style="left:397px;top:474px" width="11" height="10" viewBox="0 0 11 10"><path d="M0.5 2h4.5M5 2v5h3M5 4.5h3" stroke="#c0c0c0" stroke-width="0.9" fill="none"/><rect x="3.5" y="0.8" width="2.5" height="2.4" fill="#c0c0c0"/><rect x="7.5" y="3.3" width="2.5" height="2.4" fill="#c0c0c0"/><path d="M8 8h2.5L9.2 9.5Z" fill="#c0c0c0"/></svg>
<svg style="left:416.5px;top:472.5px" width="13" height="12" viewBox="0 0 13 12"><path d="M2.5 0.3v4M0.5 2.3h4M1 0.8l3 3M4 0.8l-3 3" stroke="#c0c0c0" stroke-width="0.7"/><path d="M7.5 3.3l4 2.1v4.4l-4 2-4-2V5.4Z" fill="none" stroke="#c0c0c0" stroke-width="1"/><path d="M3.5 5.4l4 2.1 4-2.1M7.5 7.5v4.2" stroke="#c0c0c0" stroke-width="0.9" fill="none"/></svg>
<svg style="left:439px;top:474px" width="11" height="9" viewBox="0 0 11 9"><path d="M5.5 0.5C3 0.5 1.5 2.5 1.5 4.5h8c0-2-1.5-4-4-4Z" fill="#b0b0b0"/><rect x="0.5" y="5" width="10" height="3.5" fill="#909090"/><path d="M5.5 2v5" stroke="#232323" stroke-width="0.8"/></svg>
<svg style="left:455px;top:473.5px" width="10" height="10" viewBox="0 0 10 10"><rect x="0.5" y="3" width="6" height="6.5" fill="#909090"/><rect x="2" y="1.8" width="6" height="6.5" fill="#a0a0a0" stroke="#232323" stroke-width="0.5"/><rect x="3.5" y="0.5" width="6" height="6.5" fill="#c0c0c0" stroke="#232323" stroke-width="0.5"/><path d="M5 3h3" stroke="#232323" stroke-width="0.6"/></svg>
<svg style="left:470.5px;top:473px" width="11" height="11" viewBox="0 0 11 11"><rect x="0.8" y="2.6" width="9.4" height="5.8" rx="2.9" transform="rotate(-45 5.5 5.5)" fill="#a8a8a8"/><path d="M3.2 6.2l3-3M4.6 7.6l3-3M2.6 4.6l2-2M6.4 8.4l2-2" stroke="#6a6a6a" stroke-width="0.5"/></svg>
<svg style="left:491px;top:473.5px" width="11" height="10" viewBox="0 0 11 10"><rect x="0.5" y="1" width="10" height="8.5" rx="1" fill="none" stroke="#c0c0c0" stroke-width="0.9"/><path d="M2 3c2 0 2 0 3.5 2.2S7.5 7.8 9.5 7.8" stroke="#c0c0c0" stroke-width="0.9" fill="none"/><path d="M2 0v2M9 0v2" stroke="#c0c0c0" stroke-width="0.7"/></svg>
<!-- header row -->
<div class="a" style="left:0;top:488.5px;width:511px;height:1px;background:#1c1c1c"></div>
<div class="a" style="left:0;top:489.5px;width:511px;height:11.5px;background:#2a2a2a"></div>
<div class="a" style="left:0;top:501px;width:511px;height:1px;background:#1c1c1c"></div>
<svg style="left:3.5px;top:492.5px" width="8" height="6" viewBox="0 0 8 6"><path d="M0.2 3C1.2 1.2 2.5 0.3 4 0.3S6.8 1.2 7.8 3C6.8 4.8 5.5 5.7 4 5.7S1.2 4.8.2 3Z" fill="#c4c4c4"/><circle cx="4" cy="3" r="1.4" fill="#1d1d1d"/></svg>
<svg style="left:13px;top:491.5px" width="8" height="8" viewBox="0 0 8 8"><path d="M0.5 2.8h1.6L4.3 0.8v6.4L2.1 5.2H0.5Z" fill="#c4c4c4"/><circle cx="4.5" cy="4" r="3.2" fill="none" stroke="#8a8a8a" stroke-width="0.7"/></svg>
<svg style="left:23.5px;top:493px" width="6" height="6"><circle cx="3" cy="3" r="2.4" fill="#c4c4c4"/></svg>
<svg style="left:31px;top:491px" width="7" height="8" viewBox="0 0 7 8"><path d="M1.6 3.5V2.2a1.9 1.9 0 0 1 3.8 0v1.3" fill="none" stroke="#c4c4c4" stroke-width="0.9"/><rect x="0.5" y="3.4" width="6" height="4.3" fill="#c4c4c4"/><rect x="3" y="4.5" width="1" height="2" fill="#2a2a2a"/></svg>
<div class="a" style="left:43px;top:491px;width:1px;height:9px;background:#222"></div>
<svg style="left:51px;top:491px" width="8" height="8" viewBox="0 0 8 8"><path d="M0.3 0.3h3.5l3.9 3.9-3.5 3.5L0.3 3.8Z" fill="#c0c0c0"/><circle cx="2" cy="2" r="0.8" fill="#2a2a2a"/></svg>
<div class="t" style="left:65.5px;top:492.5px;font-size:7px;color:#555;font-style:italic;-webkit-text-stroke-width:0.2px">#</div>
<div class="a" style="left:80px;top:491px;width:1px;height:9px;background:#222"></div>
<div class="t" style="left:84.60px;top:492.00px;font-size:7.6px;letter-spacing:-0.97px;color:#8a8a8a;-webkit-text-stroke-width:0.2px">ソース名</div>
<div class="a" style="left:217px;top:491px;width:1px;height:9px;background:#222"></div>
<div class="t" style="left:220px;top:491.5px;font-size:7.6px;letter-spacing:-0.9px;color:#8a8a8a;-webkit-text-stroke-width:0.2px">モード</div>
<div class="t" style="left:265px;top:492.5px;font-size:6.5px;color:#8a8a8a;-webkit-text-stroke-width:0.2px">T</div>
<div class="t" style="left:276.00px;top:492px;font-size:7.3px;letter-spacing:-0.13px;color:#8a8a8a;-webkit-text-stroke-width:0.2px">ﾄﾗｯｸﾏｯﾄ</div>
<svg style="left:320px;top:491.5px" width="70" height="9" viewBox="0 0 70 9">
<path d="M0.5 8h7M1 8V5C1 2.5 2 1 4 1s3 1.5 3 4v3" fill="#b8b8b8"/><circle cx="2.8" cy="4.5" r="0.7" fill="#2a2a2a"/><circle cx="5.2" cy="4.5" r="0.7" fill="#2a2a2a"/><path d="M1.5 8.5l1-1.2 1.5 1.2 1.5-1.2 1 1.2" stroke="#b8b8b8" stroke-width="0.5" fill="none"/>
<path d="M13 1.5l3 3-3 3-3-3Z" fill="none" stroke="#b8b8b8" stroke-width="1"/><circle cx="13" cy="4.5" r="0.8" fill="#b8b8b8"/>
<path d="M19 1l6 6.5" stroke="#b8b8b8" stroke-width="0.9"/>
<path d="M30.8 1.2c-.9-.3-1.5.2-1.7 1.2L28.1 8.2M27.6 3.6h2.4M31 3.8l2.8 4M33.8 3.8L31 7.8" stroke="#b8b8b8" stroke-width="0.8" fill="none"/>
<rect x="36" y="1.5" width="6.5" height="6.5" fill="#b8b8b8"/><path d="M37.5 4h3.5" stroke="#2a2a2a" stroke-width="0.6"/>
<rect x="44.5" y="2" width="7.5" height="4.8" rx="2.4" transform="rotate(-45 48.2 4.4)" fill="none" stroke="#b8b8b8" stroke-width="1.2"/>
<circle cx="57.5" cy="4.6" r="3" fill="none" stroke="#b8b8b8" stroke-width="0.9"/><path d="M57.5 1.6a3 3 0 0 1 0 6Z" fill="#b8b8b8" transform="rotate(45 57.5 4.6)"/>
<path d="M65 1.3l3 1.5v3.6l-3 1.6-3-1.6V2.8Z" fill="none" stroke="#b8b8b8" stroke-width="0.8"/><path d="M62 2.8l3 1.5 3-1.5M65 4.3v3.7" stroke="#b8b8b8" stroke-width="0.7" fill="none"/>
</svg>
<div class="a" style="left:419px;top:491px;width:1px;height:9px;background:#222"></div>
<div class="t" style="left:423.00px;top:491.50px;font-size:7.6px;letter-spacing:-0.80px;color:#8a8a8a;-webkit-text-stroke-width:0.2px">親とリンク</div>
<div class="a" style="left:501px;top:491px;width:1px;height:9px;background:#222"></div>
<!-- layer row -->
<div class="a" style="left:0;top:502px;width:511px;height:10.5px;background:#292929"></div>
<svg style="left:3.5px;top:504.5px" width="8" height="6" viewBox="0 0 8 6"><path d="M0.2 3C1.2 1.2 2.5 0.3 4 0.3S6.8 1.2 7.8 3C6.8 4.8 5.5 5.7 4 5.7S1.2 4.8.2 3Z" fill="#c4c4c4"/><circle cx="4" cy="3" r="1.4" fill="#1d1d1d"/></svg>
<div class="a" style="left:22px;top:503.5px;width:8px;height:7.5px;background:#1d1d1d"></div>
<div class="a" style="left:31px;top:503.5px;width:7.5px;height:7.5px;background:#1d1d1d"></div>
<svg style="left:46.5px;top:506px" width="5" height="3"><path d="M0.3 0.3L2.5 2.5 4.7 0.3" stroke="#aaa" stroke-width="0.8" fill="none"/></svg>
<div class="a" style="left:53px;top:503px;width:9px;height:8.5px;background:#6679e0"></div>
<div class="t" style="left:66.5px;top:504.5px;font-size:7.6px;color:#aaa;-webkit-text-stroke-width:0.2px">1</div>
<svg style="left:84.5px;top:503.5px" width="7" height="7" viewBox="0 0 7 7"><path d="M3.5 0.2l1 2.2 2.3.2-1.8 1.5.6 2.4-2.1-1.3-2.1 1.3.6-2.4L.2 2.6l2.3-.2Z" fill="#c4c4c4"/></svg>
<div class="t" style="left:95.25px;top:504.50px;font-size:7.6px;letter-spacing:-2.05px;color:#b0b0b0;-webkit-text-stroke:0.25px #b0b0b0">シェイプレイヤー</div><div class="t" style="left:144.6px;top:504.5px;font-size:7.6px;color:#b0b0b0;-webkit-text-stroke:0.25px #b0b0b0">1</div>
<div class="a" style="left:218px;top:502.5px;width:41px;height:9.5px;background:#1b1b1b"></div>
<div class="t" style="left:221px;top:503.3px;font-size:7.3px;letter-spacing:-0.5px;color:#c0c0c0;font-weight:bold">通常</div>
<svg style="left:251px;top:506px" width="5" height="3"><path d="M0.3 0.3L2.5 2.5 4.7 0.3" stroke="#bbb" stroke-width="0.8" fill="none"/></svg>
<div class="a" style="left:264px;top:503.5px;width:7px;height:7.5px;background:#1d1d1d"></div>
<svg style="left:320px;top:503px" width="30" height="9" viewBox="0 0 30 9">
<path d="M0.5 8h7M1 8V5C1 2.5 2 1 4 1s3 1.5 3 4v3" fill="#b0b0b0"/><circle cx="2.8" cy="4.5" r="0.7" fill="#262626"/><circle cx="5.2" cy="4.5" r="0.7" fill="#262626"/>
<rect x="9" y="0" width="8" height="9" fill="#1d1d1d"/><path d="M13 1.8l2.6 2.6-2.6 2.6-2.6-2.6Z" fill="none" stroke="#666" stroke-width="0.9"/>
<rect x="18" y="0" width="8" height="9" fill="#1d1d1d"/><path d="M19.5 7.8l5-6" stroke="#c0c0c0" stroke-width="0.9"/>
</svg>
<div class="a" style="left:366px;top:504.5px;width:7.5px;height:7px;background:#1d1d1d"></div>
<div class="a" style="left:375px;top:504.5px;width:7.5px;height:7px;background:#1d1d1d"></div>
<div class="a" style="left:384px;top:504.5px;width:7.5px;height:7px;background:#1d1d1d"></div>
<svg style="left:422.5px;top:503px" width="9" height="9" viewBox="0 0 9 9"><path d="M4.6 4.4a1 1 0 1 1 1-1V5a1.2 1.2 0 0 0 2.4 0V4.5A3.5 3.5 0 1 0 5.5 7.9" fill="none" stroke="#a8a8a8" stroke-width="0.9"/></svg>
<div class="a" style="left:434px;top:502.5px;width:64px;height:9.5px;background:#1b1b1b"></div>
<div class="t" style="left:438px;top:503.3px;font-size:7.3px;letter-spacing:-0.5px;color:#c0c0c0;font-weight:bold">なし</div>
<svg style="left:492px;top:506px" width="5" height="3"><path d="M0.3 0.3L2.5 2.5 4.7 0.3" stroke="#bbb" stroke-width="0.8" fill="none"/></svg>
<!-- sub rows -->
<div class="a" style="left:0;top:512.5px;width:511px;height:1px;background:#1c1c1c"></div>
<div class="a" style="left:0;top:524.5px;width:511px;height:1px;background:#1e1e1e"></div>
<div class="a" style="left:0;top:536px;width:511px;height:1px;background:#1e1e1e"></div>
<div class="a" style="left:0;top:547.5px;width:511px;height:1px;background:#1e1e1e"></div>
<div class="a" style="left:0;top:559px;width:511px;height:1px;background:#1e1e1e"></div>
<svg style="left:58px;top:517.5px" width="5" height="3"><path d="M0.3 0.3L2.5 2.5 4.7 0.3" stroke="#aaa" stroke-width="0.8" fill="none"/></svg>
<div class="t" style="left:66.60px;top:514.30px;font-size:7.6px;letter-spacing:-2.02px;color:#a8a8a8;-webkit-text-stroke:0.25px #a8a8a8">コンテンツ</div>
<div class="t" style="left:392px;top:514.5px;font-size:7px;letter-spacing:-0.6px;color:#a0a0a0;text-decoration:underline;-webkit-text-stroke-width:0.2px">追加:</div>
<svg style="left:409px;top:514.8px" width="7" height="7" viewBox="0 0 7 7"><circle cx="3.5" cy="3.5" r="3.3" fill="#c8c8c8"/><path d="M2.6 1.8L5 3.5 2.6 5.2Z" fill="#232323"/></svg>
<div class="a" style="left:3px;top:526px;width:9px;height:9px;background:#1e1e1e"></div>
<svg style="left:3.5px;top:527.5px" width="8" height="6" viewBox="0 0 8 6"><path d="M0.2 3C1.2 1.2 2.5 0.3 4 0.3S6.8 1.2 7.8 3C6.8 4.8 5.5 5.7 4 5.7S1.2 4.8.2 3Z" fill="#c4c4c4"/><circle cx="4" cy="3" r="1.4" fill="#1d1d1d"/></svg>
<svg style="left:69px;top:528px" width="3" height="5"><path d="M0.3 0.3L2.5 2.5 0.3 4.7" stroke="#aaa" stroke-width="0.8" fill="none"/></svg>
<div class="t" style="left:80px;top:526.80px;font-size:7.3px;letter-spacing:-0.9px;color:#a8a8a8;-webkit-text-stroke:0.25px #a8a8a8">多角形</div><div class="t" style="left:101.8px;top:527.3px;font-size:7.6px;color:#a8a8a8;-webkit-text-stroke:0.25px #a8a8a8">1</div>
<div class="a" style="left:320.5px;top:525.5px;width:96px;height:9.5px;background:#1b1b1b"></div>
<div class="t" style="left:324px;top:526.5px;font-size:7.3px;letter-spacing:-0.5px;color:#c0c0c0;font-weight:bold">通常</div>
<svg style="left:408px;top:529px" width="5" height="3"><path d="M0.3 0.3L2.5 2.5 4.7 0.3" stroke="#bbb" stroke-width="0.8" fill="none"/></svg>
<div class="a" style="left:3px;top:537.5px;width:9px;height:9px;background:#1e1e1e"></div>
<svg style="left:3.5px;top:539px" width="8" height="6" viewBox="0 0 8 6"><path d="M0.2 3C1.2 1.2 2.5 0.3 4 0.3S6.8 1.2 7.8 3C6.8 4.8 5.5 5.7 4 5.7S1.2 4.8.2 3Z" fill="#c4c4c4"/><circle cx="4" cy="3" r="1.4" fill="#1d1d1d"/></svg>
<svg style="left:69px;top:539.5px" width="3" height="5"><path d="M0.3 0.3L2.5 2.5 0.3 4.7" stroke="#aaa" stroke-width="0.8" fill="none"/></svg>
<div class="t" style="left:80px;top:537.80px;font-size:7.3px;letter-spacing:-0.9px;color:#a8a8a8;-webkit-text-stroke:0.25px #a8a8a8">楕円形</div><div class="t" style="left:101.8px;top:538.3px;font-size:7.6px;color:#a8a8a8;-webkit-text-stroke:0.25px #a8a8a8">1</div>
<div class="a" style="left:320.5px;top:537px;width:96px;height:9px;background:#1b1b1b"></div>
<div class="t" style="left:324px;top:538px;font-size:7.3px;letter-spacing:-0.5px;color:#c0c0c0;font-weight:bold">通常</div>
<svg style="left:408px;top:540.5px" width="5" height="3"><path d="M0.3 0.3L2.5 2.5 0.3 4.7" stroke="#bbb" stroke-width="0.8" fill="none" transform="rotate(90 2.5 1.5)"/></svg>
<svg style="left:57px;top:551px" width="3" height="5"><path d="M0.3 0.3L2.5 2.5 0.3 4.7" stroke="#aaa" stroke-width="0.8" fill="none"/></svg>
<div class="t" style="left:65.20px;top:550.00px;font-size:7.6px;letter-spacing:-2.10px;color:#a8a8a8;-webkit-text-stroke:0.25px #a8a8a8">トランスフォーム</div>
<div class="t" style="left:320.00px;top:550px;font-size:7.3px;letter-spacing:-0.63px;color:#3b86d4;-webkit-text-stroke-width:0.3px">ﾘｾｯﾄ</div>

<!-- timeline right area -->
<div class="a" style="left:510.5px;top:471px;width:4px;height:157px;background:#1c1c1c"></div>
<div class="a" style="left:511px;top:471px;width:502px;height:6px;background:#1a1a1a"></div>
<div class="a" style="left:516px;top:472px;width:492px;height:4.5px;background:#676767"></div>
<div class="a" style="left:511px;top:471.8px;width:5.5px;height:5px;background:#3b8ee8;border-radius:2.5px 0 0 2.5px"></div>
<div class="a" style="left:1008px;top:471.8px;width:5px;height:5px;background:#3b8ee8;border-radius:0 2.5px 2.5px 0"></div>
<div class="a" style="left:511px;top:477px;width:502px;height:12px;background:#232323"></div>
<div class="t" style="left:514.5px;top:478px;font-size:7.5px;color:#b0b0b0;letter-spacing:-0.1px;-webkit-text-stroke-width:0.2px">00s</div>
<div class="t" style="left:559.0px;top:478px;font-size:7.5px;color:#b0b0b0;letter-spacing:-0.1px;-webkit-text-stroke-width:0.2px">01s</div>
<div class="t" style="left:608.3px;top:478px;font-size:7.5px;color:#b0b0b0;letter-spacing:-0.1px;-webkit-text-stroke-width:0.2px">02s</div>
<div class="t" style="left:657.5px;top:478px;font-size:7.5px;color:#b0b0b0;letter-spacing:-0.1px;-webkit-text-stroke-width:0.2px">03s</div>
<div class="t" style="left:706.8px;top:478px;font-size:7.5px;color:#b0b0b0;letter-spacing:-0.1px;-webkit-text-stroke-width:0.2px">04s</div>
<div class="t" style="left:756.1px;top:478px;font-size:7.5px;color:#b0b0b0;letter-spacing:-0.1px;-webkit-text-stroke-width:0.2px">05s</div>
<div class="t" style="left:805.4px;top:478px;font-size:7.5px;color:#b0b0b0;letter-spacing:-0.1px;-webkit-text-stroke-width:0.2px">06s</div>
<div class="t" style="left:854.7px;top:478px;font-size:7.5px;color:#b0b0b0;letter-spacing:-0.1px;-webkit-text-stroke-width:0.2px">07s</div>
<div class="t" style="left:903.9px;top:478px;font-size:7.5px;color:#b0b0b0;letter-spacing:-0.1px;-webkit-text-stroke-width:0.2px">08s</div>
<div class="t" style="left:953.2px;top:478px;font-size:7.5px;color:#b0b0b0;letter-spacing:-0.1px;-webkit-text-stroke-width:0.2px">09s</div>
<div class="t" style="left:1002.5px;top:478px;font-size:7.5px;color:#b0b0b0;width:9px;overflow:hidden;-webkit-text-stroke-width:0.2px">10s</div>
<div class="a" style="left:515.1px;top:486px;width:0.9px;height:3px;background:#8a8a8a"></div>
<div class="a" style="left:564.4px;top:486px;width:0.9px;height:3px;background:#8a8a8a"></div>
<div class="a" style="left:613.7px;top:486px;width:0.9px;height:3px;background:#8a8a8a"></div>
<div class="a" style="left:662.9px;top:486px;width:0.9px;height:3px;background:#8a8a8a"></div>
<div class="a" style="left:712.2px;top:486px;width:0.9px;height:3px;background:#8a8a8a"></div>
<div class="a" style="left:761.5px;top:486px;width:0.9px;height:3px;background:#8a8a8a"></div>
<div class="a" style="left:810.8px;top:486px;width:0.9px;height:3px;background:#8a8a8a"></div>
<div class="a" style="left:860.1px;top:486px;width:0.9px;height:3px;background:#8a8a8a"></div>
<div class="a" style="left:909.3px;top:486px;width:0.9px;height:3px;background:#8a8a8a"></div>
<div class="a" style="left:958.6px;top:486px;width:0.9px;height:3px;background:#8a8a8a"></div>
<div class="a" style="left:1007.9px;top:486px;width:0.9px;height:3px;background:#8a8a8a"></div>

<div class="a" style="left:511px;top:489px;width:502px;height:1px;background:#1a1a1a"></div>
<div class="a" style="left:516px;top:489.5px;width:492px;height:9px;background:#5e5e5e"></div>
<div class="a" style="left:511.5px;top:489.5px;width:5px;height:9px;background:#3b8ee8;border-radius:2.5px 0 0 2.5px"></div>
<div class="a" style="left:1008px;top:489.5px;width:4.5px;height:9px;background:#3b8ee8;border-radius:0 2.5px 2.5px 0"></div>
<div class="a" style="left:516px;top:498.5px;width:492px;height:2.5px;background:#1eaa1e"></div>
<div class="a" style="left:516px;top:501.5px;width:492px;height:10.5px;background:#4a5488"></div>
<div class="a" style="left:516px;top:512px;width:492px;height:116px;background:#2e2e2e"></div>
<div class="a" style="left:516px;top:512.5px;width:492px;height:47px;background:#2a2a2a"></div>
<div class="a" style="left:516px;top:512px;width:492px;height:1px;background:#1e1e1e"></div>
<div class="a" style="left:516px;top:524px;width:492px;height:1px;background:#232323"></div>
<div class="a" style="left:516px;top:535.5px;width:492px;height:1px;background:#232323"></div>
<div class="a" style="left:516px;top:547px;width:492px;height:1px;background:#232323"></div>
<div class="a" style="left:516px;top:559px;width:492px;height:1px;background:#232323"></div>
<div class="a" style="left:1008px;top:501.5px;width:16px;height:126px;background:#262626"></div>
<div class="a" style="left:1012px;top:471px;width:12px;height:30px;background:#232323"></div>
<svg style="left:1014px;top:490px" width="9" height="9" viewBox="0 0 9 9"><path d="M0.5 0.5h8v5L4.5 8.5 0.5 5.5Z" fill="#c4c4c4"/></svg>
<div class="a" style="left:1012px;top:501px;width:12px;height:1px;background:#1a1a1a"></div>
<svg style="left:1013.5px;top:503px" width="10" height="9" viewBox="0 0 10 9"><path d="M3.5 0.5h6v5h-6L0.5 3Z" fill="none" stroke="#c0c0c0" stroke-width="0.9"/><circle cx="4" cy="6.5" r="2" fill="#262626" stroke="#c0c0c0" stroke-width="0.9"/></svg>
<!-- playhead -->
<div class="a" style="left:515.2px;top:479px;width:1.2px;height:149px;background:#3d70b4"></div>
<svg style="left:512px;top:480px" width="8" height="9" viewBox="0 0 8 9"><path d="M0.2 0.5h7.6v3.3L4 8.8 0.2 3.8Z" fill="#3b8ee8"/></svg>
<svg style="left:513px;top:514.5px" width="6" height="42" viewBox="0 0 6 42"><g stroke="#a8c0e0" stroke-width="1" fill="none"><path d="M0.5 0.5h5M3 0.5v7M0.5 7.5h5"/><path d="M0.5 12h5M3 12v7M0.5 19h5"/><path d="M0.5 23.5h5M3 23.5v7M0.5 30.5h5"/><path d="M0.5 34.5h5M3 34.5v7M0.5 41.5h5"/></g></svg>
<!-- bottom bar -->
<div class="a" style="left:0;top:627.5px;width:511px;height:1px;background:#1a1a1a"></div>
<div class="a" style="left:0;top:628.5px;width:1024px;height:11.5px;background:#202020"></div>
<svg style="left:4px;top:630px" width="9" height="9" viewBox="0 0 9 9"><path d="M0.5 2.5L3 0.5h5.5v5.5L6 8.5H0.5Z" fill="#3b86d4"/><rect x="4" y="4" width="3.5" height="3.5" fill="none" stroke="#1a1a1a" stroke-width="0.8"/></svg>
<svg style="left:15.5px;top:630px" width="9" height="9" viewBox="0 0 9 9"><circle cx="3.3" cy="3.3" r="2.8" fill="none" stroke="#3b86d4" stroke-width="1"/><rect x="4" y="4" width="4.5" height="4.5" fill="#202020" stroke="#3b86d4" stroke-width="1"/></svg>
<svg style="left:26px;top:630px" width="8" height="9" viewBox="0 0 8 9"><path d="M2.5 0.5C1 0.5 1.5 2.5.5 4.5c1 2 .5 4 2 4M5.5 0.5c1.5 0 1 2 2 4-1 2-.5 4-2 4M4 1.5v6" stroke="#b0b0b0" stroke-width="1" fill="none"/></svg>
<svg style="left:515px;top:631px" width="8" height="4" viewBox="0 0 8 4"><path d="M0 4L4 0.5 8 4Z" fill="#b8b8b8"/></svg>
<svg style="left:526px;top:630.5px" width="8" height="8"><circle cx="4" cy="4" r="2.8" fill="none" stroke="#c0c0c0" stroke-width="1.2"/></svg>
<div class="a" style="left:534px;top:633.8px;width:21px;height:0.8px;background:#444"></div>
<svg style="left:563px;top:630.5px" width="11" height="5" viewBox="0 0 11 5"><path d="M0 5L3 1.5 5 3 7 0.3 11 5Z" fill="#b8b8b8"/></svg>
</body></html>
